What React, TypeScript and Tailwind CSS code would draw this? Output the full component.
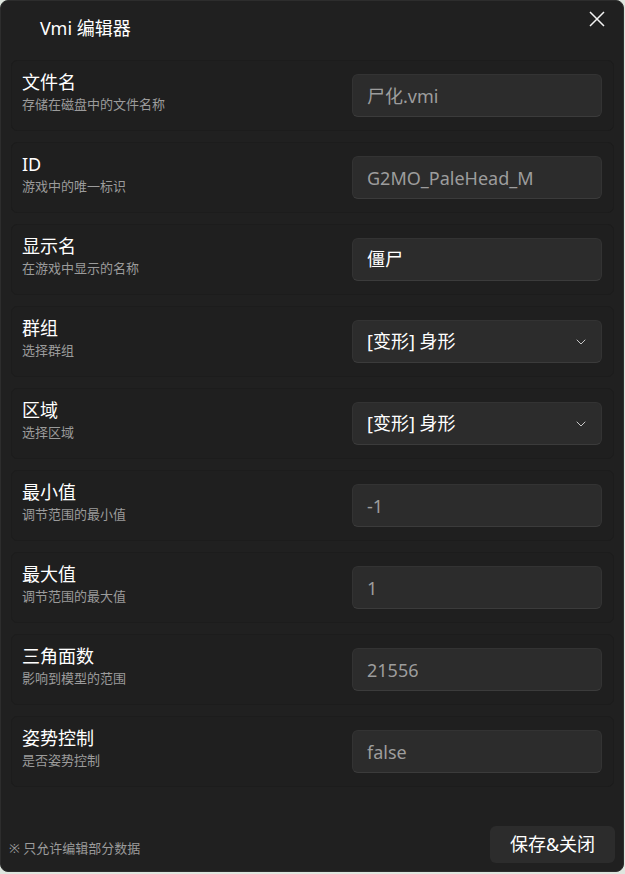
import { ChevronDown } from 'lucide-react';

type Field = {
  label: string;
  hint: string;
  value: string;
  kind: 'readonly' | 'edit' | 'select';
};

const fields: Field[] = [
  { label: '文件名', hint: '存储在磁盘中的文件名称', value: '尸化.vmi', kind: 'readonly' },
  { label: 'ID', hint: '游戏中的唯一标识', value: 'G2MO_PaleHead_M', kind: 'readonly' },
  { label: '显示名', hint: '在游戏中显示的名称', value: '僵尸', kind: 'edit' },
  { label: '群组', hint: '选择群组', value: '[变形] 身形', kind: 'select' },
  { label: '区域', hint: '选择区域', value: '[变形] 身形', kind: 'select' },
  { label: '最小值', hint: '调节范围的最小值', value: '-1', kind: 'readonly' },
  { label: '最大值', hint: '调节范围的最大值', value: '1', kind: 'readonly' },
  { label: '三角面数', hint: '影响到模型的范围', value: '21556', kind: 'readonly' },
  { label: '姿势控制', hint: '是否姿势控制', value: 'false', kind: 'readonly' },
];

function FieldRow({ field }: { field: Field }) {
  return (
    <div className="h-[71px] flex items-center justify-between pl-[10px] pr-[11px] rounded-md bg-[#1f1f1f] border border-[#1c1c1c]">
      {/* label + hint */}
      <div className="flex flex-col pb-2">
        <span className="text-[18px] leading-[24px] text-white">{field.label}</span>
        <span className="text-[13px] leading-[20px] text-[#9b9b9b]">{field.hint}</span>
      </div>

      {/* value box */}
      <div className="w-[250px] h-[43px] flex items-center justify-between pl-[14px] pr-[12px] rounded-md bg-[#2c2c2c] border border-[#333333] border-b-[#3b3b3b]">
        <span
          className={
            field.kind === 'readonly'
              ? 'h-[22px] leading-[22px] overflow-hidden text-[18px] text-[#9d9d9d] whitespace-pre'
              : 'text-[18px] text-white whitespace-pre'
          }
        >
          {field.value}
        </span>
        {field.kind === 'select' && (
          <ChevronDown className="w-4 h-4 text-[#c8c8c8]" strokeWidth={1.5} />
        )}
      </div>
    </div>
  );
}

export default function App() {
  return (
    <div
      className="w-[625px] h-[874px] bg-[#dfe6df]"
      style={{ fontFamily: '"Noto Sans", "Noto Sans CJK SC", sans-serif' }}
    >
      <div className="w-[624px] h-[872px] flex flex-col rounded-lg bg-[#202020] border border-[#2d2d2d] overflow-hidden">
        {/* Header */}
        <div className="h-[59px] flex items-start justify-between">
          <h1 className="pl-[39px] pt-[14px] text-[18px] leading-[26px] text-white">Vmi 编辑器</h1>
          <button className="mt-[10px] mr-[18px] w-[16px] h-[16px] flex items-center justify-center" aria-label="关闭">
            <svg width="16" height="16" viewBox="0 0 16 16" fill="none">
              <path d="M1 1L15 15M15 1L1 15" stroke="#f2f2f2" strokeWidth="1.5" />
            </svg>
          </button>
        </div>

        {/* Fields */}
        <div className="flex flex-col gap-[11px] pl-[10px] pr-[9px]">
          {fields.map((f) => (
            <FieldRow key={f.label} field={f} />
          ))}
        </div>

        {/* Footer */}
        <div className="mt-auto flex items-end justify-between pl-[8px] pr-[8px] pb-[8px]">
          <span className="text-[13px] leading-[18px] pb-[6px] text-[#9b9b9b]">※ 只允许编辑部分数据</span>
          <button className="w-[125px] h-[37px] rounded-md bg-[#2c2c2c] text-[18px] text-white">保存&amp;关闭</button>
        </div>
      </div>
    </div>
  );
}
